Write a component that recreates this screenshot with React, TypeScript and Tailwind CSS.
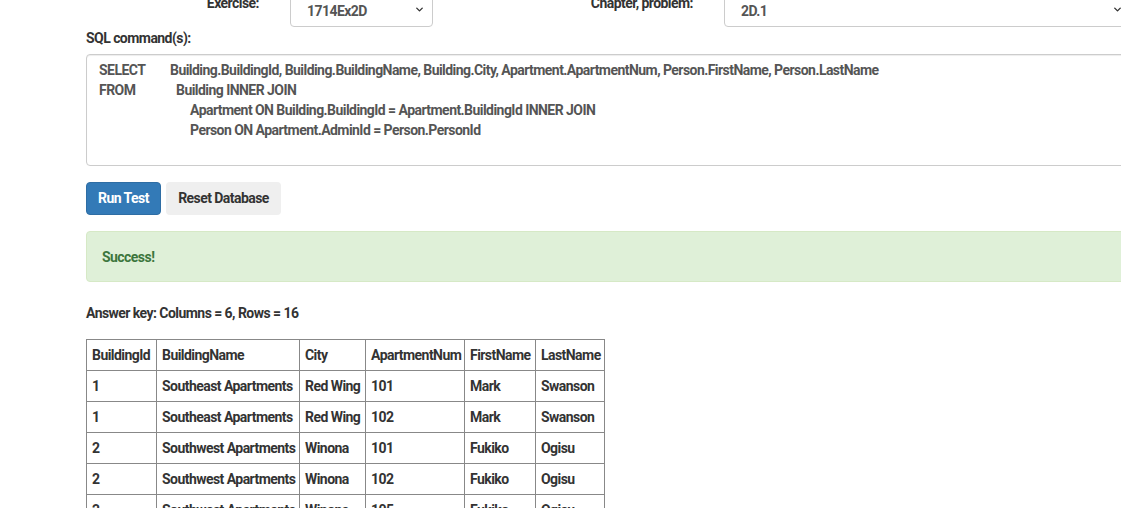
import { ChevronDown } from "lucide-react";

const rows = [
  ["1", "Southeast Apartments", "Red Wing", "101", "Mark", "Swanson"],
  ["1", "Southeast Apartments", "Red Wing", "102", "Mark", "Swanson"],
  ["2", "Southwest Apartments", "Winona", "101", "Fukiko", "Ogisu"],
  ["2", "Southwest Apartments", "Winona", "102", "Fukiko", "Ogisu"],
  ["2", "Southwest Apartments", "Winona", "105", "Fukiko", "Ogisu"],
];

const headers = [
  { label: "BuildingId", w: "w-[70px]" },
  { label: "BuildingName", w: "w-[143px]" },
  { label: "City", w: "w-[66px]" },
  { label: "ApartmentNum", w: "w-[99px]" },
  { label: "FirstName", w: "w-[71px]" },
  { label: "LastName", w: "w-[69px]" },
];

function FakeSelect({ value, className }: { value: string; className: string }) {
  return (
    <div
      className={`flex items-start justify-between h-[34px] border border-[#ccc] rounded-[4px] bg-white pl-[16px] pr-[7px] pt-[7px] text-[#555] ${className}`}
    >
      <span className="leading-5">{value}</span>
      <ChevronDown className="w-[11px] h-[11px] mt-[3px] text-[#333]" strokeWidth={3} />
    </div>
  );
}

export default function App() {
  return (
    <div className="h-[525px] w-full bg-white">
      <div className="h-[508px] overflow-hidden font-['Roboto','Liberation_Sans',sans-serif] font-bold text-[14px] tracking-[-0.55px] text-[#333]">
        <div className="ml-[86px] w-[1045px] -mt-[7px]">
          {/* exercise / chapter pickers */}
          <div className="flex h-[34px]">
            <label className="w-[173px] text-right leading-5">Exercise:</label>
            <FakeSelect value="1714Ex2D" className="ml-[31px] w-[143px]" />
            <label className="w-[260px] text-right leading-5">Chapter, problem:</label>
            <FakeSelect value="2D.1" className="ml-[31px] flex-1" />
          </div>

          <div className="mt-[1px] leading-5">SQL command(s):</div>

          <div className="mt-[6px] h-[112px] border border-[#ccc] rounded-[4px] pl-[12px] pt-[5px] text-[#555] leading-5 shadow-[inset_0_1px_1px_rgba(0,0,0,0.075)]">
            <div className="flex">
              <span className="w-[71px]">SELECT</span>
              <span>
                Building.BuildingId, Building.BuildingName, Building.City, Apartment.ApartmentNum,
                Person.FirstName, Person.LastName
              </span>
            </div>
            <div className="flex">
              <span className="w-[77px]">FROM</span>
              <span>Building INNER JOIN</span>
            </div>
            <div className="pl-[91px]">
              Apartment ON Building.BuildingId = Apartment.BuildingId INNER JOIN
            </div>
            <div className="pl-[91px]">Person ON Apartment.AdminId = Person.PersonId</div>
          </div>

          <div className="mt-[16px] flex gap-[5px]">
            <button className="w-[75px] h-[33px] rounded-[4px] bg-[#337ab7] border border-[#2e6da4] text-white">
              Run Test
            </button>
            <button className="w-[115px] h-[33px] rounded-[4px] bg-[#efefef] text-[#333]">
              Reset Database
            </button>
          </div>

          <div className="mt-[16px] h-[51px] border border-[#d6e9c6] rounded-[4px] bg-[#dff0d8] text-[#3c763d] pl-[15px] pt-[15px] leading-5">
            Success!
          </div>

          <div className="mt-[21px] leading-5">Answer key: Columns = 6, Rows = 16</div>

          <table className="mt-[16px] w-[518px] border-collapse table-fixed">
            <thead>
              <tr>
                {headers.map((h) => (
                  <th
                    key={h.label}
                    className={`${h.w} border border-[#888] px-[5px] py-[5px] leading-5 text-left font-bold whitespace-nowrap overflow-hidden`}
                  >
                    {h.label}
                  </th>
                ))}
              </tr>
            </thead>
            <tbody>
              {rows.map((r, i) => (
                <tr key={i}>
                  {r.map((c, j) => (
                    <td
                      key={j}
                      className="border border-[#888] px-[5px] py-[5px] leading-5 whitespace-nowrap overflow-hidden"
                    >
                      {c}
                    </td>
                  ))}
                </tr>
              ))}
            </tbody>
          </table>
        </div>
      </div>
    </div>
  );
}
